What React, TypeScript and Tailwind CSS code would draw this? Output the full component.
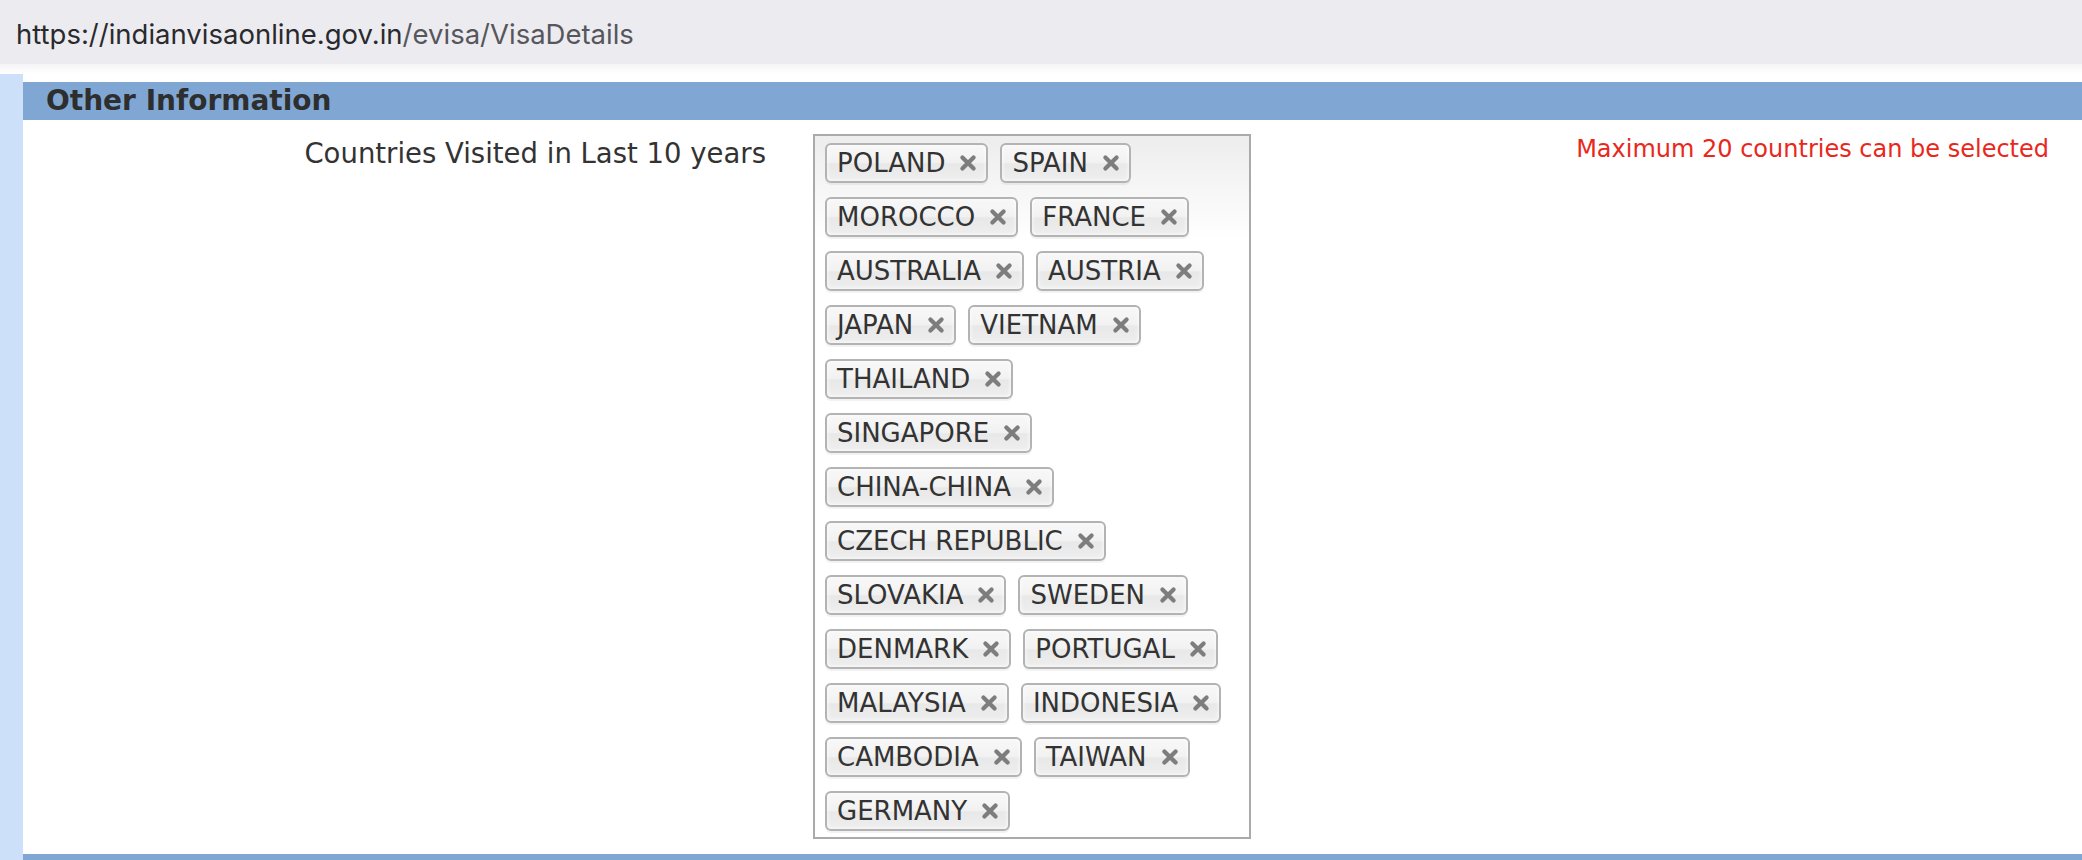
import React from "react";

const rows: string[][] = [
  ["POLAND", "SPAIN"],
  ["MOROCCO", "FRANCE"],
  ["AUSTRALIA", "AUSTRIA"],
  ["JAPAN", "VIETNAM"],
  ["THAILAND"],
  ["SINGAPORE"],
  ["CHINA-CHINA"],
  ["CZECH REPUBLIC"],
  ["SLOVAKIA", "SWEDEN"],
  ["DENMARK", "PORTUGAL"],
  ["MALAYSIA", "INDONESIA"],
  ["CAMBODIA", "TAIWAN"],
  ["GERMANY"],
];

function XIcon() {
  return (
    <svg width="18" height="18" viewBox="0 0 18 18" className="shrink-0">
      <path
        d="M3.4 3.4 L14.6 14.6 M14.6 3.4 L3.4 14.6"
        stroke="#7d7d7d"
        strokeWidth="4.2"
        strokeLinecap="round"
        fill="none"
      />
    </svg>
  );
}

function Tag({ name }: { name: string }) {
  return (
    <div className="flex h-[40px] items-center gap-[14px] rounded-[6px] border-2 border-[#b3b3b3] bg-[linear-gradient(to_bottom,#f6f6f6_20%,#f1f1f1_50%,#e8e8e8_52%,#eeeeee_100%)] pl-[10px] pr-[9px] text-[26px] leading-none text-[#333] shadow-[inset_0_0_4px_#fff,0_2px_0_rgba(0,0,0,0.05)]">
      <span>{name}</span>
      <XIcon />
    </div>
  );
}

export default function App() {
  return (
    <div className="flex h-[860px] w-[2082px] flex-col overflow-hidden bg-white font-['DejaVu_Sans',Verdana,sans-serif]">
      <div className="flex h-[64px] shrink-0 items-center bg-[#ececf0] pl-[16px] pt-[6px] font-['Inter',sans-serif] text-[27.5px] text-[#2a2a2e]">
        <span>https://indianvisaonline.gov.in</span>
        <span className="text-[#56565c]">/evisa/VisaDetails</span>
      </div>
      <div className="h-[10px] shrink-0 bg-[linear-gradient(to_bottom,#f4f4f6,#ffffff)]" />
      <div className="flex flex-1">
        <div className="w-[23px] shrink-0 bg-[#cce1f9]" />
        <div className="flex flex-1 flex-col pt-[8px]">
          <div className="flex h-[38px] shrink-0 items-center bg-[#80a7d3] pl-[23px] text-[28px] font-bold text-[#2e2e2e]">
            Other Information
          </div>
          <div className="flex pt-[14px] pb-[15px]">
            <div className="w-[743px] shrink-0 pt-[3px] text-right text-[27.5px] leading-[33px] text-[#333]">
              Countries Visited in Last 10 years
            </div>
            <div className="ml-[47px] flex w-[438px] shrink-0 flex-col gap-[14px] border-2 border-[#aaaaaa] bg-[linear-gradient(to_bottom,#eeeeee_1%,#ffffff_15%)] pt-[7px] pb-[6px] pl-[10px]">
              {rows.map((row, i) => (
                <div key={i} className="flex gap-[12px]">
                  {row.map((n) => (
                    <Tag key={n} name={n} />
                  ))}
                </div>
              ))}
            </div>
            <div className="flex flex-1 justify-end pr-[33px]">
              <div className="text-[24px] leading-[30px] text-[#e8281c]">
                Maximum 20 countries can be selected
              </div>
            </div>
          </div>
          <div className="h-[8px] shrink-0 bg-[#80a7d3]" />
        </div>
      </div>
    </div>
  );
}
